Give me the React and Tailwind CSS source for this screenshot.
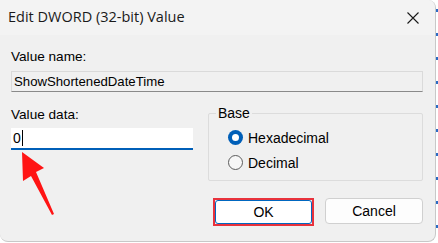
import React from 'react';

const BODY_FONT = { fontFamily: '"Liberation Sans", Arial, sans-serif' };

function Radio({ checked, label }) {
  return (
    <label className="flex items-center gap-[5px] h-[15px]">
      {checked ? (
        <span className="w-[15px] h-[15px] rounded-full bg-[#005fb8] flex items-center justify-center">
          <span className="w-[7px] h-[7px] rounded-full bg-white" />
        </span>
      ) : (
        <span className="w-[15px] h-[15px] rounded-full border border-[#5c5c5c] bg-[#f7f7f7]" />
      )}
      <span className="text-[14px] text-black leading-none">{label}</span>
    </label>
  );
}

export default function App() {
  const ticks = Array.from({ length: 11 });
  return (
    <div className="relative w-[438px] h-[243px] bg-white overflow-hidden">
      {/* dialog */}
      <div className="w-[436px] h-[242px] bg-[#f0f0f0] border-r border-b border-[#c8c8c8] rounded-tr-[8px] rounded-br-[8px] rounded-bl-[8px] overflow-hidden flex flex-col">
        {/* title bar */}
        <div className="h-[35px] bg-[#f3f3f3] flex items-center justify-between pl-[8px] pr-[16px] shrink-0">
          <span className="text-[14.5px] text-[#1a1a1a] leading-none" style={{ fontFamily: '"Open Sans", "Noto Sans", sans-serif' }}>
            Edit DWORD (32-bit) Value
          </span>
          <svg width="12" height="12" viewBox="0 0 12 12" className="mt-[1px]">
            <path d="M0.5 0.5 L11.5 11.5 M11.5 0.5 L0.5 11.5" stroke="#1a1a1a" strokeWidth="1.1" />
          </svg>
        </div>

        {/* body */}
        <div className="flex-1 px-[11px] pr-[12px] pt-[15px]" style={BODY_FONT}>
          <div className="text-[13.6px] text-black leading-none h-[14px]">Value name:</div>
          <div className="mt-[7px] h-[21px] border border-[#dadada] border-b-[#8a8a8a] bg-[#f0f0f0] flex items-center pl-[2px]">
            <span className="text-[13.2px] text-black leading-none">ShowShortenedDateTime</span>
          </div>

          <div className="flex mt-[15px] gap-[15px]">
            {/* value data */}
            <div className="w-[182px] pt-[1px]">
              <div className="text-[13.6px] text-black leading-none h-[14px]">Value data:</div>
              <div className="mt-[6px] h-[22px] bg-white border-b-2 border-[#005fb8] flex items-center pl-[2px]">
                <span className="text-[14px] text-black leading-none">0</span>
                <span className="w-[1px] h-[16px] bg-black ml-[1px]" />
              </div>
            </div>

            {/* base group */}
            <div className="flex-1 relative mt-[6px] h-[68px] border border-[#dcdcdc] rounded-[2px] pl-[19px] pt-[16px] flex flex-col gap-[10px]">
              <span className="absolute -top-[8px] left-[7px] bg-[#f0f0f0] px-[2px] text-[14px] text-black leading-none">Base</span>
              <Radio checked label="Hexadecimal" />
              <Radio label="Decimal" />
            </div>
          </div>

          {/* buttons */}
          <div className="flex justify-end gap-[11px] mt-[17px]">
            <div className="w-[101px] h-[28px] border-2 border-[#e8323c] flex">
              <button className="flex-1 bg-white border border-[#0067c0] rounded-[3px] text-[14px] text-black leading-none">
                OK
              </button>
            </div>
            <button className="w-[98px] h-[26px] bg-[#fdfdfd] border border-[#d0d0d0] rounded-[4px] text-[14px] text-black leading-none">
              Cancel
            </button>
          </div>
        </div>
      </div>

      {/* red arrow annotation */}
      <svg className="absolute left-0 top-0" width="438" height="243" viewBox="0 0 438 243">
        <polygon points="22,152 44,168 36,172 54,214 52,215 31,176 23,181" fill="#ff1414" />
      </svg>

      {/* background marks to the right */}
      <div className="absolute right-0 top-[9px] w-[2px] flex flex-col gap-[21px]">
        {ticks.map((_, i) => (
          <span key={i} className="w-[2px] h-[3px] bg-[#2b6cc4]" />
        ))}
      </div>
    </div>
  );
}
